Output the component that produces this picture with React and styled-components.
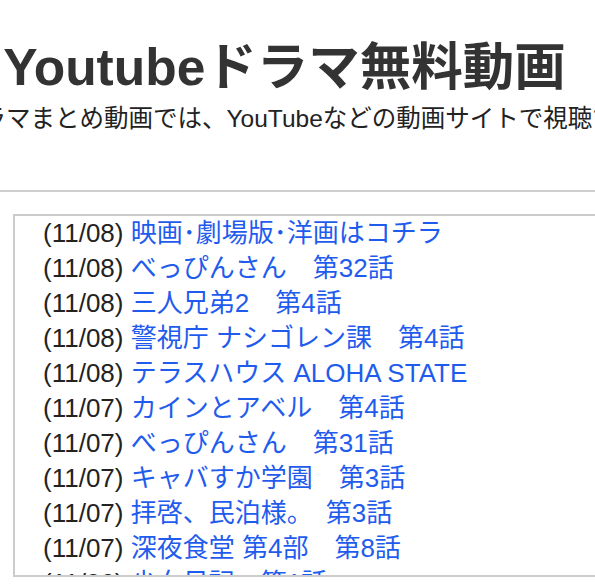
import React from 'react'
import styled, { createGlobalStyle } from 'styled-components'

const GlobalStyle = createGlobalStyle`
  html, body {
    margin: 0;
    padding: 0;
    background: #fff;
    overflow: hidden;
  }
  body {
    font-family: "Liberation Sans", Arial, "Noto Sans CJK JP", sans-serif;
    color: #222;
  }
`

const Page = styled.div`
  width: 595px;
  height: 587px;
  overflow: hidden;
`

const Header = styled.header`
  display: flex;
  flex-direction: column;
  align-items: center;
  padding: 37px 26px 0 0;
  height: 152px;
  box-sizing: border-box;
`

const Title = styled.h1`
  margin: 0;
  font-size: 51.5px;
  line-height: 60px;
  font-weight: bold;
  color: #333;
  white-space: nowrap;
`

const Lead = styled.p`
  align-self: flex-start;
  margin: 7px 0 0 -43px;
  font-size: 24.5px;
  line-height: 30px;
  color: #222;
  white-space: nowrap;
`

const Rule = styled.hr`
  margin: 38px 0 0;
  border: 0;
  height: 2px;
  background: #cfcfcf;
`

const NewsBox = styled.div`
  margin: 22px 0 0 13px;
  width: 640px;
  height: 363px;
  box-sizing: border-box;
  border: 2px solid #cccccc;
  overflow: hidden;
`

const NewsList = styled.ul`
  list-style: none;
  margin: 0;
  padding: 0 0 0 28px;
`

const NewsItem = styled.li`
  font-size: 26px;
  line-height: 35px;
  white-space: nowrap;
`

const Date = styled.span`
  color: #222;
`

const NewsLink = styled.a`
  color: #1f5ced;
  text-decoration: none;
`

const news = [
  ['11/08', '映画･劇場版･洋画はコチラ'],
  ['11/08', 'べっぴんさん　第32話'],
  ['11/08', '三人兄弟2　第4話'],
  ['11/08', '警視庁 ナシゴレン課　第4話'],
  ['11/08', 'テラスハウス ALOHA STATE'],
  ['11/07', 'カインとアベル　第4話'],
  ['11/07', 'べっぴんさん　第31話'],
  ['11/07', 'キャバすか学園　第3話'],
  ['11/07', '拝啓、民泊様。　第3話'],
  ['11/07', '深夜食堂 第4部　第8話'],
  ['11/06', '少女日記　第1話'],
  ['11/06', 'べっぴんさん　第30話'],
]

export default function App() {
  return (
    <Page>
      <GlobalStyle />
      <Header>
        <Title>Youtubeドラマ無料動画</Title>
        <Lead>ドラマまとめ動画では、YouTubeなどの動画サイトで視聴できるドラマをまとめています。</Lead>
      </Header>
      <Rule />
      <NewsBox>
        <NewsList>
          {news.map(([date, title], i) => (
            <NewsItem key={i}>
              <Date>({date})</Date> <NewsLink href="#">{title}</NewsLink>
            </NewsItem>
          ))}
        </NewsList>
      </NewsBox>
    </Page>
  )
}
